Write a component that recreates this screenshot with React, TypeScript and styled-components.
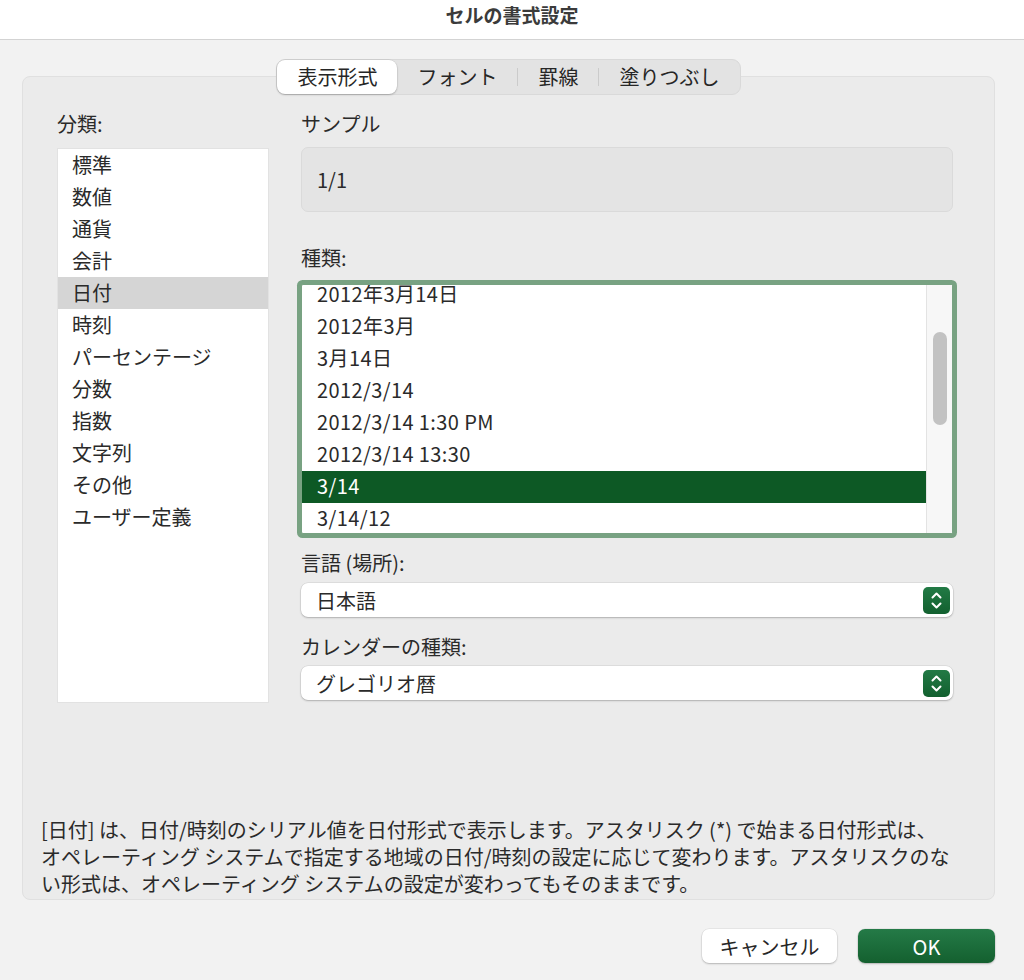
import styled, { createGlobalStyle } from "styled-components";

const CATEGORIES = [
  "標準",
  "数値",
  "通貨",
  "会計",
  "日付",
  "時刻",
  "パーセンテージ",
  "分数",
  "指数",
  "文字列",
  "その他",
  "ユーザー定義",
];

const DATE_TYPES = [
  "2012年3月14日",
  "2012年3月",
  "3月14日",
  "2012/3/14",
  "2012/3/14 1:30 PM",
  "2012/3/14 13:30",
  "3/14",
  "3/14/12",
];

const TABS = ["表示形式", "フォント", "罫線", "塗りつぶし"];

const DESCRIPTION = [
  "[日付] は、日付/時刻のシリアル値を日付形式で表示します。アスタリスク (*) で始まる日付形式は、",
  "オペレーティング システムで指定する地域の日付/時刻の設定に応じて変わります。アスタリスクのな",
  "い形式は、オペレーティング システムの設定が変わってもそのままです。",
];

const Stepper = () => (
  <StyledStepper>
    <svg width="13" height="19" viewBox="0 0 13 19" fill="none">
      <path
        d="M2.5 6.5 L6.5 2.5 L10.5 6.5"
        stroke="#fff"
        strokeWidth="2"
        strokeLinecap="round"
        strokeLinejoin="round"
      />
      <path
        d="M2.5 12.5 L6.5 16.5 L10.5 12.5"
        stroke="#fff"
        strokeWidth="2"
        strokeLinecap="round"
        strokeLinejoin="round"
      />
    </svg>
  </StyledStepper>
);

const App = () => {
  const activeTab = 0;

  return (
    <StyledWindow>
      <GlobalStyle />
      <StyledTitleBar>セルの書式設定</StyledTitleBar>
      <StyledBody>
        <StyledTabRow>
          <StyledTabGroup>
            {TABS.map((tab, i) => (
              <StyledTabSlot key={tab}>
                {i > 0 && i - 1 !== activeTab && i !== activeTab && <StyledTabSep />}
                <StyledTab $active={i === activeTab}>{tab}</StyledTab>
              </StyledTabSlot>
            ))}
          </StyledTabGroup>
        </StyledTabRow>

        <StyledPanel>
          <StyledColumns>
            <StyledColumn>
              <StyledLabel>分類:</StyledLabel>
              <StyledCategoryList>
                {CATEGORIES.map((c) => (
                  <StyledCategory key={c} $selected={c === "日付"}>
                    {c}
                  </StyledCategory>
                ))}
              </StyledCategoryList>
            </StyledColumn>

            <StyledColumn>
              <StyledLabel>サンプル</StyledLabel>
              <StyledSample>1/1</StyledSample>

              <StyledLabel $gap={34}>種類:</StyledLabel>
              <StyledTypeList>
                <StyledTypeViewport>
                  <StyledTypeRows>
                    {DATE_TYPES.map((t) => (
                      <StyledTypeRow key={t} $selected={t === "3/14"}>
                        {t}
                      </StyledTypeRow>
                    ))}
                  </StyledTypeRows>
                </StyledTypeViewport>
                <StyledScrollTrack>
                  <StyledScrollThumb />
                </StyledScrollTrack>
              </StyledTypeList>

              <StyledLabel $gap={17}>言語 (場所):</StyledLabel>
              <StyledPopup>
                <span>日本語</span>
                <Stepper />
              </StyledPopup>

              <StyledLabel $gap={18}>カレンダーの種類:</StyledLabel>
              <StyledPopup $gap={7}>
                <span>グレゴリオ暦</span>
                <Stepper />
              </StyledPopup>
            </StyledColumn>
          </StyledColumns>

          <StyledDescription>
            {DESCRIPTION.map((line) => (
              <div key={line}>{line}</div>
            ))}
          </StyledDescription>
        </StyledPanel>

        <StyledFooter>
          <StyledButton>キャンセル</StyledButton>
          <StyledButton $primary>OK</StyledButton>
        </StyledFooter>
      </StyledBody>
    </StyledWindow>
  );
};

const FONT = `"Noto Sans CJK JP", "Noto Sans", sans-serif`;

const GlobalStyle = createGlobalStyle`
  html, body {
    margin: 0;
    padding: 0;
  }
  body {
    font-family: ${FONT};
    color: #2a2a2a;
    background: #f2f2f2;
  }
`;

const StyledWindow = styled.div`
  height: 980px;
  display: flex;
  flex-direction: column;
  background: #f2f2f2;
  overflow: hidden;
`;

const StyledTitleBar = styled.div`
  height: 40px;
  box-sizing: border-box;
  flex-shrink: 0;
  display: flex;
  align-items: center;
  justify-content: center;
  padding-bottom: 11px;
  background: #ffffff;
  border-bottom: 1px solid #d3d3d3;
  font-size: 19px;
  font-weight: 700;
  color: #3b3b3b;
`;

const StyledBody = styled.div`
  flex: 1;
  display: flex;
  flex-direction: column;
  padding: 19px 29px 0 22px;
`;

const StyledTabRow = styled.div`
  display: flex;
  justify-content: center;
  margin-bottom: -19px;
  position: relative;
  z-index: 1;
`;

const StyledTabGroup = styled.div`
  display: flex;
  align-items: center;
  height: 36px;
  box-sizing: border-box;
  background: #e3e3e3;
  border: 1px solid #d9d9d9;
  border-radius: 9px;
`;

const StyledTabSlot = styled.div`
  display: flex;
  align-items: center;
`;

const StyledTabSep = styled.div`
  width: 1px;
  height: 18px;
  background: #cbcbcb;
`;

const StyledTab = styled.div<{ $active?: boolean }>`
  height: 34px;
  box-sizing: border-box;
  display: flex;
  align-items: center;
  padding: 0 20px 2px;
  font-size: 20px;
  color: #262626;
  border-radius: 8px;
  background: ${(p) => (p.$active ? "#ffffff" : "transparent")};
  box-shadow: ${(p) =>
    p.$active ? "0 1px 2px rgba(0,0,0,0.22), 0 0 0 0.5px rgba(0,0,0,0.08)" : "none"};
`;

const StyledPanel = styled.div`
  height: 824px;
  box-sizing: border-box;
  display: flex;
  flex-direction: column;
  padding-top: 35px;
  background: #ebebeb;
  border: 1px solid #e0e0e0;
  border-radius: 8px;
`;

const StyledColumns = styled.div`
  display: grid;
  grid-template-columns: 212px 652px;
  column-gap: 32px;
  padding-left: 34px;
`;

const StyledColumn = styled.div`
  display: flex;
  flex-direction: column;
`;

const StyledLabel = styled.div<{ $gap?: number }>`
  font-size: 20px;
  line-height: 24px;
  height: 24px;
  margin-top: ${(p) => p.$gap ?? 0}px;
  color: #2a2a2a;
`;

const StyledCategoryList = styled.div`
  margin-top: 12px;
  height: 555px;
  box-sizing: border-box;
  background: #ffffff;
  border: 1px solid #e2e2e2;
`;

const StyledCategory = styled.div<{ $selected?: boolean }>`
  height: 32px;
  line-height: 31px;
  padding-left: 14px;
  font-size: 20px;
  background: ${(p) => (p.$selected ? "#d5d5d5" : "transparent")};
`;

const StyledSample = styled.div`
  margin-top: 11px;
  height: 65px;
  box-sizing: border-box;
  display: flex;
  align-items: center;
  padding: 0 0 1px 15px;
  font-size: 20px;
  background: #e4e4e4;
  border: 1px solid #dadada;
  border-radius: 7px;
`;

const StyledTypeList = styled.div`
  margin-top: 14px;
  height: 250px;
  box-sizing: border-box;
  display: flex;
  background: #ffffff;
  border: 1px solid #78a282;
  border-radius: 2px;
  box-shadow: 0 0 0 4px #78a282;
`;

const StyledTypeViewport = styled.div`
  flex: 1;
  overflow: hidden;
`;

const StyledTypeRows = styled.div`
  margin-top: -6px;
`;

const StyledTypeRow = styled.div<{ $selected?: boolean }>`
  height: 32px;
  line-height: 30px;
  padding-left: 15px;
  font-size: 20px;
  letter-spacing: 0.4px;
  color: ${(p) => (p.$selected ? "#ffffff" : "#2a2a2a")};
  background: ${(p) => (p.$selected ? "#0d5925" : "transparent")};
`;

const StyledScrollTrack = styled.div`
  width: 26px;
  box-sizing: border-box;
  display: flex;
  justify-content: center;
  padding-top: 47px;
  background: #f7f7f7;
  border-left: 1px solid #e3e3e3;
`;

const StyledScrollThumb = styled.div`
  width: 14px;
  height: 93px;
  border-radius: 7px;
  background: #c2c2c2;
`;

const StyledPopup = styled.div<{ $gap?: number }>`
  margin-top: ${(p) => p.$gap ?? 8}px;
  height: 34px;
  box-sizing: border-box;
  display: flex;
  align-items: center;
  justify-content: space-between;
  padding: 0 3px 0 15px;
  font-size: 20px;
  background: #ffffff;
  border-radius: 7px;
  box-shadow: 0 1px 2px rgba(0, 0, 0, 0.22), 0 0 0 0.5px rgba(0, 0, 0, 0.1);
`;

const StyledStepper = styled.div`
  width: 27px;
  height: 27px;
  display: flex;
  align-items: center;
  justify-content: center;
  border-radius: 5px;
  background: linear-gradient(#227a45, #12602f);
`;

const StyledDescription = styled.div`
  margin-top: auto;
  padding: 0 10px 2px 18px;
  font-size: 20px;
  line-height: 27px;
  color: #2a2a2a;
  white-space: nowrap;
`;

const StyledFooter = styled.div`
  display: flex;
  justify-content: flex-end;
  gap: 21px;
  margin-top: 29px;
`;

const StyledButton = styled.button<{ $primary?: boolean }>`
  width: ${(p) => (p.$primary ? 137 : 135)}px;
  height: 34px;
  border: none;
  border-radius: 7px;
  font-family: ${FONT};
  font-size: 20px;
  color: ${(p) => (p.$primary ? "#ffffff" : "#262626")};
  background: ${(p) =>
    p.$primary ? "linear-gradient(#247a47, #14602f)" : "#ffffff"};
  box-shadow: 0 1px 2px rgba(0, 0, 0, 0.22), 0 0 0 0.5px rgba(0, 0, 0, 0.08);
`;

export default App;
